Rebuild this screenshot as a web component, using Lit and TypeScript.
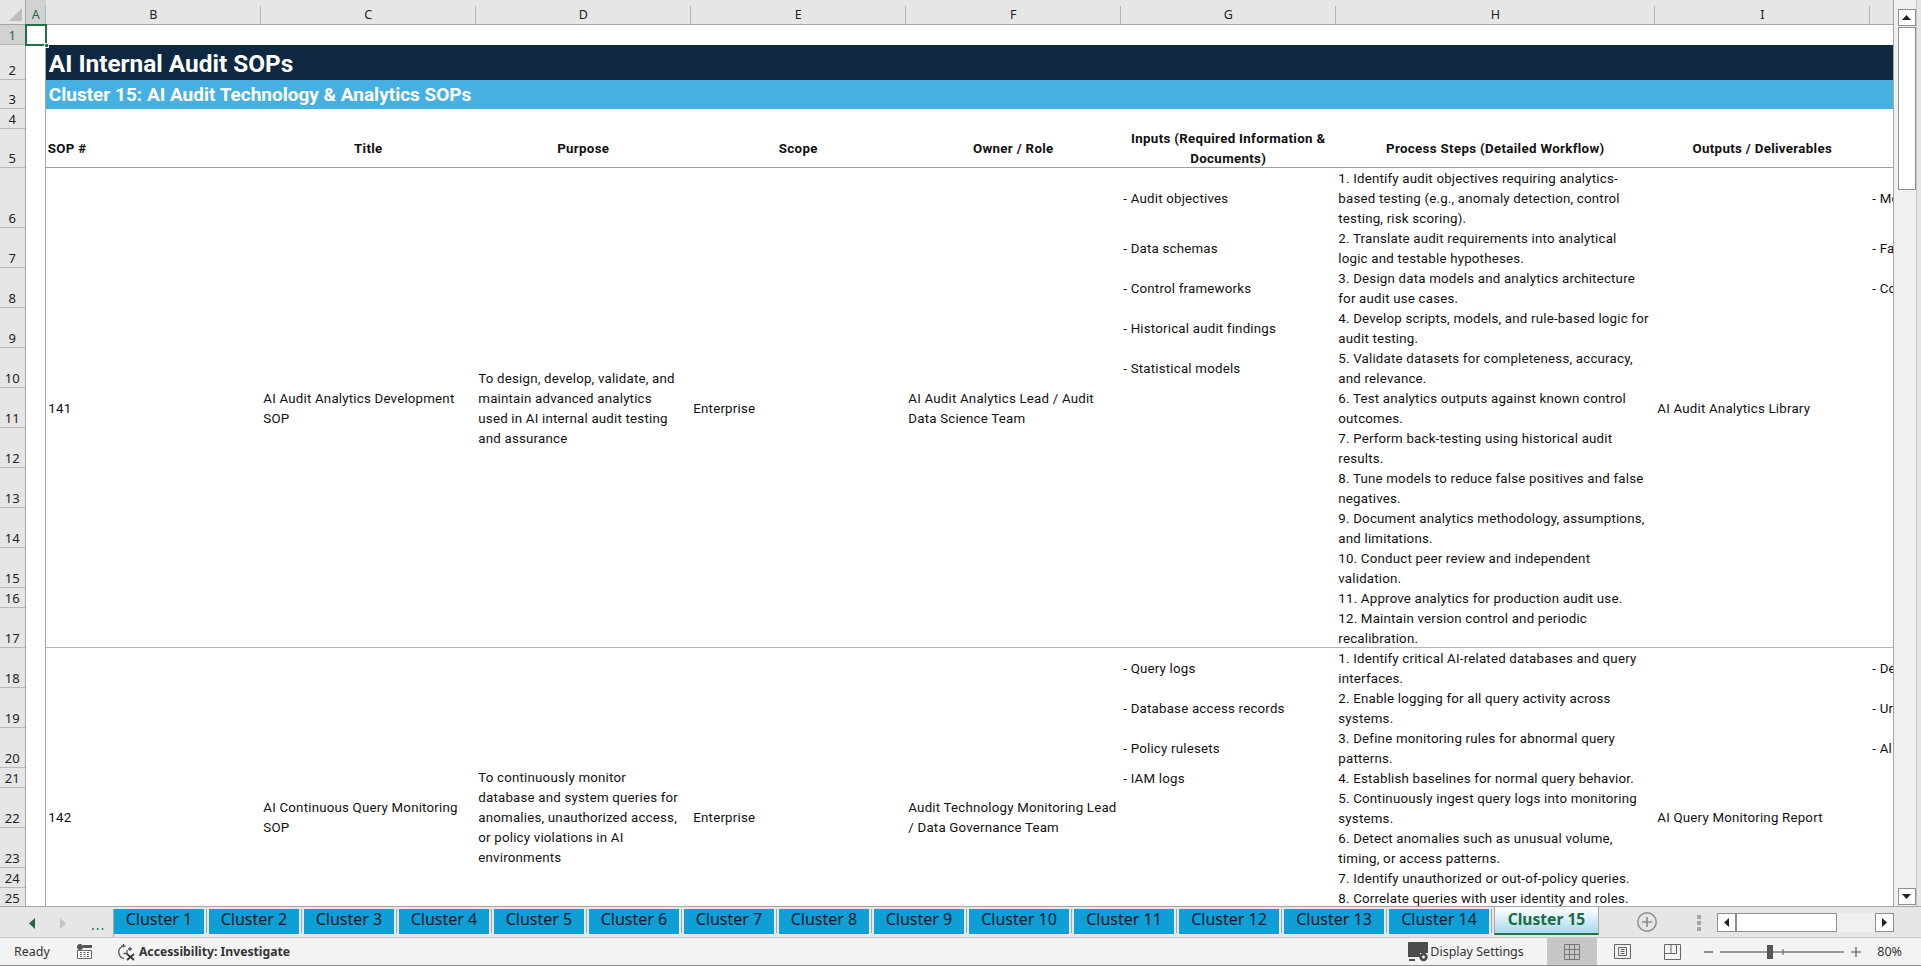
import { LitElement, html, css } from "lit";
import { customElement } from "lit/decorators.js";

const COLS = ["A", "B", "C", "D", "E", "F", "G", "H", "I", ""];
const ROW_H = [20, 35, 29, 20, 39, 60, 40, 40, 40, 40, 40, 40, 40, 40, 40, 20, 40, 40, 40, 40, 20, 40, 40, 20, 20];

const HEADERS: [number, string[], string][] = [
  [3, ["SOP #"], "left"],
  [4, ["Title"], ""],
  [5, ["Purpose"], ""],
  [6, ["Scope"], ""],
  [7, ["Owner / Role"], ""],
  [8, ["Inputs (Required Information &", "Documents)"], ""],
  [9, ["Process Steps (Detailed Workflow)"], ""],
  [10, ["Outputs / Deliverables"], ""],
];

// [grid column, first sheet row, spanned rows, text lines]
type C = [number, number, number, string[]];
const CELLS: C[] = [
  [3, 6, 12, ["141"]],
  [4, 6, 12, ["AI Audit Analytics Development", "SOP"]],
  [5, 6, 12, ["To design, develop, validate, and", "maintain advanced analytics", "used in AI internal audit testing", "and assurance"]],
  [6, 6, 12, ["Enterprise"]],
  [7, 6, 12, ["AI Audit Analytics Lead / Audit", "Data Science Team"]],
  [10, 6, 12, ["AI Audit Analytics Library"]],
  [8, 6, 1, ["- Audit objectives"]],
  [8, 7, 1, ["- Data schemas"]],
  [8, 8, 1, ["- Control frameworks"]],
  [8, 9, 1, ["- Historical audit findings"]],
  [8, 10, 1, ["- Statistical models"]],
  [9, 6, 1, ["1. Identify audit objectives requiring analytics-", "based testing (e.g., anomaly detection, control", "testing, risk scoring)."]],
  [9, 7, 1, ["2. Translate audit requirements into analytical", "logic and testable hypotheses."]],
  [9, 8, 1, ["3. Design data models and analytics architecture", "for audit use cases."]],
  [9, 9, 1, ["4. Develop scripts, models, and rule-based logic for", "audit testing."]],
  [9, 10, 1, ["5. Validate datasets for completeness, accuracy,", "and relevance."]],
  [9, 11, 1, ["6. Test analytics outputs against known control", "outcomes."]],
  [9, 12, 1, ["7. Perform back-testing using historical audit", "results."]],
  [9, 13, 1, ["8. Tune models to reduce false positives and false", "negatives."]],
  [9, 14, 1, ["9. Document analytics methodology, assumptions,", "and limitations."]],
  [9, 15, 1, ["10. Conduct peer review and independent", "validation."]],
  [9, 16, 1, ["11. Approve analytics for production audit use."]],
  [9, 17, 1, ["12. Maintain version control and periodic", "recalibration."]],
  [11, 6, 1, ["- Mo"]],
  [11, 7, 1, ["- Fa"]],
  [11, 8, 1, ["- Co"]],
  [3, 18, 9, ["142"]],
  [4, 18, 9, ["AI Continuous Query Monitoring", "SOP"]],
  [5, 18, 9, ["To continuously monitor", "database and system queries for", "anomalies, unauthorized access,", "or policy violations in AI", "environments"]],
  [6, 18, 9, ["Enterprise"]],
  [7, 18, 9, ["Audit Technology Monitoring Lead", "/ Data Governance Team"]],
  [10, 18, 9, ["AI Query Monitoring Report"]],
  [8, 18, 1, ["- Query logs"]],
  [8, 19, 1, ["- Database access records"]],
  [8, 20, 1, ["- Policy rulesets"]],
  [8, 21, 1, ["- IAM logs"]],
  [9, 18, 1, ["1. Identify critical AI-related databases and query", "interfaces."]],
  [9, 19, 1, ["2. Enable logging for all query activity across", "systems."]],
  [9, 20, 1, ["3. Define monitoring rules for abnormal query", "patterns."]],
  [9, 21, 1, ["4. Establish baselines for normal query behavior."]],
  [9, 22, 1, ["5. Continuously ingest query logs into monitoring", "systems."]],
  [9, 23, 1, ["6. Detect anomalies such as unusual volume,", "timing, or access patterns."]],
  [9, 24, 1, ["7. Identify unauthorized or out-of-policy queries."]],
  [9, 25, 1, ["8. Correlate queries with user identity and roles."]],
  [11, 18, 1, ["- De"]],
  [11, 19, 1, ["- Ur"]],
  [11, 20, 1, ["- Al"]],
];

const tri = (d: string, fill: string, w = 9, h = 12) =>
  html`<svg width=${w} height=${h} viewBox="0 0 ${w} ${h}"><path d=${d} fill=${fill}></path></svg>`;

@customElement("app-root")
export class AppRoot extends LitElement {
  static styles = css`
    :host {
      display: flex;
      flex-direction: column;
      width: 100vw;
      height: 100vh;
      overflow: hidden;
      background: #e6e6e6;
      font-family: "Roboto", "Noto Sans", sans-serif;
      color: #111;
    }
    .main { flex: 0 0 906px; display: flex; min-height: 0; }
    .sheet {
      flex: 0 0 1893.5px;
      overflow: hidden;
      background: #fff;
      border-right: 1px solid #a6a6a6;
      box-sizing: border-box;
    }
    .grid {
      display: grid;
      grid-template-columns: 25.5px 20.3px repeat(6, 215px) 319px 215px 200px;
      grid-template-rows: 25px 20px 35px 29px 20px 39px 60px repeat(9, 40px) 20px 40px 40px 40px 40px 20px 40px 40px 20px 20px 78px;
      font-size: 13.3px;
      letter-spacing: 0.2px;
    }
    .corner {
      grid-column: 1; grid-row: 1;
      background: #e6e6e6;
      border-bottom: 1.5px solid #a6a6a6;
      border-right: 1px solid #a6a6a6;
      display: flex; align-items: flex-end; justify-content: flex-end;
      padding: 0 3px 3px 0; box-sizing: border-box;
    }
    .ch {
      grid-row: 1;
      background: #e6e6e6;
      border-bottom: 1.5px solid #a6a6a6;
      box-sizing: border-box;
      display: flex; align-items: center; justify-content: center;
      font-family: "Noto Sans", sans-serif;
      font-size: 12.5px;
      letter-spacing: 0;
      padding-top: 5px;
      color: #222;
      position: relative;
    }
    .ch::after {
      content: ""; position: absolute; right: 0; top: 6px; bottom: 0;
      width: 1px; background: #b4b4b4;
    }
    .ch.on { background: #d2d2d2; color: #1d6b40; border-bottom-color: #217346; }
    .rh {
      grid-column: 1;
      background: #e6e6e6;
      border-bottom: 1px solid #b8b8b8;
      border-right: 1px solid #a6a6a6;
      box-sizing: border-box;
      display: flex; align-items: flex-end; justify-content: center;
      font-family: "Noto Sans", sans-serif;
      font-size: 13px;
      letter-spacing: 0;
      line-height: 17.5px;
      color: #222;
    }
    .rh.on { background: #d2d2d2; color: #1d6b40; border-right: 1px solid #217346; }
    .freeze {
      grid-column: 2; grid-row: 3 / -1;
      border-right: 1.5px solid #a6a6a6;
      box-sizing: border-box;
    }
    .sel {
      grid-column: 2; grid-row: 2;
      outline: 2px solid #217346; outline-offset: -1px;
      position: relative;
    }
    .sel::after {
      content: ""; position: absolute; right: -3px; bottom: -3px;
      width: 5px; height: 5px; background: #217346; border: 1px solid #fff;
      box-sizing: border-box;
    }
    .title {
      grid-column: 3 / -1; grid-row: 3;
      background: #0e2841; color: #fff;
      font-size: 24.4px; font-weight: 700; letter-spacing: 0;
      display: flex; align-items: center; padding: 1px 0 0 3px;
    }
    .sub {
      grid-column: 3 / -1; grid-row: 4;
      background: #45b0e1; color: #fff;
      font-size: 19px; font-weight: 700; letter-spacing: 0;
      display: flex; align-items: center; padding-left: 3px;
    }
    .hd {
      grid-row: 6;
      display: flex; align-items: center; justify-content: center; text-align: center;
      font-weight: 700; line-height: 20px; white-space: nowrap; letter-spacing: 0.33px;
      box-sizing: border-box; padding: 0 2px;
      min-width: 0;
    }
    .hd.left { justify-content: flex-start; }
    .rule5 { grid-row: 6; grid-column: 3 / -1; border-bottom: 1.5px solid #a0a0a0; align-self: end; }
    .rule { grid-row: 18; grid-column: 3 / -1; border-bottom: 1.5px solid #b4b4b4; align-self: end; }
    .c {
      display: flex; align-items: center;
      padding: 1.5px 2.5px 0; white-space: nowrap; line-height: 20px;
      min-width: 0; overflow: hidden; box-sizing: border-box;
    }
    .c.steps { padding: 2px 2.5px 0; }

    .vbar {
      flex: 0 0 23.5px;
      background: #f0f0f0;
      display: flex; flex-direction: column;
      padding: 9px 0 1px 4px;
      box-sizing: border-box;
      border-right: 1px solid #c4c4c4;
    }
    .vbar .btn {
      height: 17px; flex: none;
      background: #fff; border: 1px solid #8f8f8f; box-sizing: border-box;
      display: flex; align-items: center; justify-content: center;
    }
    .vbar .thumb {
      height: 163px; flex: none; margin-top: 1px;
      background: #fff; border: 1px solid #8f8f8f; box-sizing: border-box;
    }
    .vbar .sp { flex: 1; }

    .tabs {
      flex: 0 0 31px;
      display: flex;
      align-items: flex-start;
      background: #e6e6e6;
      border-top: 1.5px solid #a6a6a6;
      box-sizing: border-box;
      font-family: "Noto Sans", sans-serif;
    }
    .nav { width: 114px; height: 28px; flex: none; display: flex; align-items: center; padding-left: 29px; box-sizing: border-box; gap: 25px; color: #217346; border-right: 1.5px solid #a6a6a6; margin-top: 2px; }
    .dots { font-size: 14px; letter-spacing: 1px; line-height: 14px; margin-top: 3px; }
    .tab {
      flex: none; height: 25.5px; margin-top: 1.5px; padding-bottom: 4.5px;
      background: #0f9ed5; color: #0a1a28;
      display: flex; align-items: center; justify-content: center;
      font-size: 16px; box-sizing: border-box;
    }
    .sep { flex: none; width: 5px; height: 24px; margin-top: 2px; display: flex; justify-content: center; }
    .sep::before { content: ""; width: 1.5px; background: #a6a6a6; }
    .tab.active {
      margin-top: -1.5px; height: 29.5px; width: 105px;
      background: linear-gradient(#ffffff, #a8d9ef);
      color: #1d6b40; font-weight: 700; font-size: 15.6px;
      border: 1px solid #a6a6a6;
      border-bottom: 2.5px solid #217346;
      padding-bottom: 2px;
    }
    .add { flex: none; margin-left: 38px; margin-top: 5px; display: flex; }
    .grip { flex: none; margin-left: 40px; margin-top: 8px; display: flex; flex-direction: column; gap: 2.5px; }
    .grip i { display: block; width: 3.5px; height: 3.5px; background: #a6a6a6; }
    .hbar { flex: none; margin-left: 16px; margin-top: 5.5px; display: flex; height: 19.5px; width: 177px; background: #f0f0f0; }
    .hbar .b { width: 19px; flex: none; background: #fff; border: 1px solid #8f8f8f; box-sizing: border-box; display: flex; align-items: center; justify-content: center; }
    .hbar .t { width: 101px; flex: none; background: #fff; border: 1px solid #8f8f8f; border-left-width: 1.5px; box-sizing: border-box; }
    .hbar .s { flex: 1; }

    .status {
      flex: 1;
      background: #f3f3f3;
      border-top: 1.5px solid #c8c8c8;
      border-bottom: 1.5px solid #8f8f8f;
      box-sizing: border-box;
      display: flex; align-items: center;
      font-family: "Noto Sans", sans-serif;
      font-size: 12.5px; color: #333;
      padding-left: 14px;
    }
    .status svg { flex: none; display: block; }
    .acc { font-weight: 700; color: #333; margin-left: 3px; font-size: 12.2px; }
    .fill { flex: 1; }
    .gap { width: 23.5px; flex: none; }
    .view { align-self: stretch; width: 50px; flex: none; display: flex; align-items: center; justify-content: center; }
    .view.on { background: #c6c6c6; }
    .zoom { display: flex; align-items: center; flex: none; margin-left: 7px; }
    .pct { margin-left: 15px; margin-right: 19px; }
    .ready-ic { margin-left: 27px; }
    .acc-ic { margin-left: 24px; }
  `;

  render() {
    return html`
      <div class="main">
        <div class="sheet">
          <div class="grid">
            <div class="corner">
              <svg width="13" height="13" viewBox="0 0 13 13"><path d="M13 0V13H0Z" fill="#bdbdbd"></path></svg>
            </div>
            ${COLS.map(
              (c, i) => html`<div class="ch ${i === 0 ? "on" : ""}" style="grid-column:${i + 2}">${c}</div>`
            )}
            ${ROW_H.map(
              (_, i) => html`<div class="rh ${i === 0 ? "on" : ""}" style="grid-row:${i + 2}">${i + 1}</div>`
            )}
            <div class="freeze"></div>
            <div class="sel"></div>
            <div class="title">AI Internal Audit SOPs</div>
            <div class="sub">Cluster 15: AI Audit Technology &amp; Analytics SOPs</div>
            <div class="rule5"></div>
            <div class="rule"></div>
            ${HEADERS.map(
              ([col, lines, cls]) =>
                html`<div class="hd ${cls}" style="grid-column:${col}">
                  <span>${lines.map((l, i) => html`${i ? html`<br />` : ""}${l}`)}</span>
                </div>`
            )}
            ${CELLS.map(
              ([col, row, span, lines]) =>
                html`<div class="c ${col === 9 ? "steps" : ""}" style="grid-column:${col};grid-row:${row + 1} / span ${span}">
                  <span>${lines.map((l, i) => html`${i ? html`<br />` : ""}${l}`)}</span>
                </div>`
            )}
          </div>
        </div>
        <div class="vbar">
          <div class="btn">${tri("M4.5 0L9 5H0Z", "#222", 9, 5)}</div>
          <div class="thumb"></div>
          <div class="sp"></div>
          <div class="btn">${tri("M0 0H9L4.5 5Z", "#222", 9, 5)}</div>
        </div>
      </div>
      <div class="tabs">
        <div class="nav">
          ${tri("M6 0V11L0 5.5Z", "#1d6b40", 6, 11)}
          ${tri("M0 0V11L6 5.5Z", "#c4c4c4", 6, 11)}
          <span class="dots">...</span>
        </div>
        ${Array.from({ length: 14 }, (_, i) => i + 1).map(
          (n) => html`
            <div class="tab" style="width:${n < 10 ? 90 : 100}px">Cluster ${n}</div>
            <div class="sep"></div>
          `
        )}
        <div class="tab active">Cluster 15</div>
        <div class="add">
          <svg width="20" height="20" viewBox="0 0 20 20" fill="none" stroke="#8a8a8a">
            <circle cx="10" cy="10" r="9.2" stroke-width="1.4"></circle>
            <path d="M10 5V15M5 10H15" stroke-width="1.6"></path>
          </svg>
        </div>
        <div class="grip"><i></i><i></i><i></i></div>
        <div class="hbar">
          <div class="b">${tri("M5 0V9L0 4.5Z", "#222", 5, 9)}</div>
          <div class="t"></div>
          <div class="s"></div>
          <div class="b">${tri("M0 0V9L5 4.5Z", "#222", 5, 9)}</div>
        </div>
      </div>
      <div class="status">
        <span>Ready</span>
        <svg class="ready-ic" width="15" height="15" viewBox="0 0 15 15">
          <circle cx="3" cy="3" r="3" fill="#555"></circle>
          <path d="M6 1H15V4H6Z" fill="#555"></path>
          <path d="M0.5 6.5H14.5V14.5H0.5Z" fill="#fff" stroke="#666"></path>
          <path d="M3 8.5H5M6.5 8.5H8.5M10 8.5H12M3 10.5H5M6.5 10.5H8.5M10 10.5H12M3 12.5H5M6.5 12.5H8.5M10 12.5H12" stroke="#666"></path>
        </svg>
        <svg class="acc-ic" width="20" height="18" viewBox="0 0 20 18" fill="none" stroke="#555" stroke-width="1.3">
          <path d="M6 3.5A6.5 6.5 0 0 0 8 15.5"></path>
          <path d="M7.5 1V4.5M5.5 3H9.5M11 7V10.5H7.5"></path>
          <path d="M11 11L18 17M18 11L11 17" stroke="#333" stroke-width="1.7"></path>
          <path d="M14 4V8M12 6H16"></path>
        </svg>
        <span class="acc">Accessibility: Investigate</span>
        <span class="fill"></span>
        <svg width="22" height="22" viewBox="0 0 22 22">
          <path d="M0 2Q0 1 1 1H19Q20 1 20 2V12H12V16H0Z" fill="#4d4d4d"></path>
          <path d="M1 18H7V20H1Z" fill="#4d4d4d"></path>
          <circle cx="15.5" cy="16" r="4.2" fill="#4d4d4d"></circle>
          <circle cx="15.5" cy="16" r="1.5" fill="#f3f3f3"></circle>
        </svg>
        <span>Display Settings</span>
        <span class="gap"></span>
        <div class="view on">
          <svg width="16" height="16" viewBox="0 0 16 16" fill="none" stroke="#777">
            <path d="M0.5 0.5H15.5V15.5H0.5ZM5.5 0.5V15.5M10.5 0.5V15.5M0.5 5.5H15.5M0.5 10.5H15.5"></path>
          </svg>
        </div>
        <div class="view">
          <svg width="17" height="15" viewBox="0 0 17 15" fill="none" stroke="#666">
            <path d="M0.5 0.5H16.5V14.5H0.5ZM4.5 3.5H12.5V11.5H4.5ZM6.5 5.5H10.5M6.5 7.5H10.5M6.5 9.5H10.5"></path>
          </svg>
        </div>
        <div class="view">
          <svg width="17" height="16" viewBox="0 0 17 16" fill="none" stroke="#666">
            <path d="M0.5 0.5H16.5V15.5H0.5ZM0.5 9.5H12.5V0.5M7 0.5V9.5"></path>
          </svg>
        </div>
        <div class="zoom">
          <svg width="158" height="16" viewBox="0 0 158 16" fill="none" stroke="#555">
            <path d="M0 8H9" stroke-width="1.3"></path>
            <path d="M16 8H140" stroke-width="1.2" stroke="#444"></path>
            <path d="M79 5V11" stroke-width="1"></path>
            <rect x="63" y="1" width="6" height="14" fill="#555" stroke="none"></rect>
            <path d="M147 8H157M152 3V13" stroke-width="1.2"></path>
          </svg>
        </div>
        <span class="pct">80%</span>
      </div>
    `;
  }
}
